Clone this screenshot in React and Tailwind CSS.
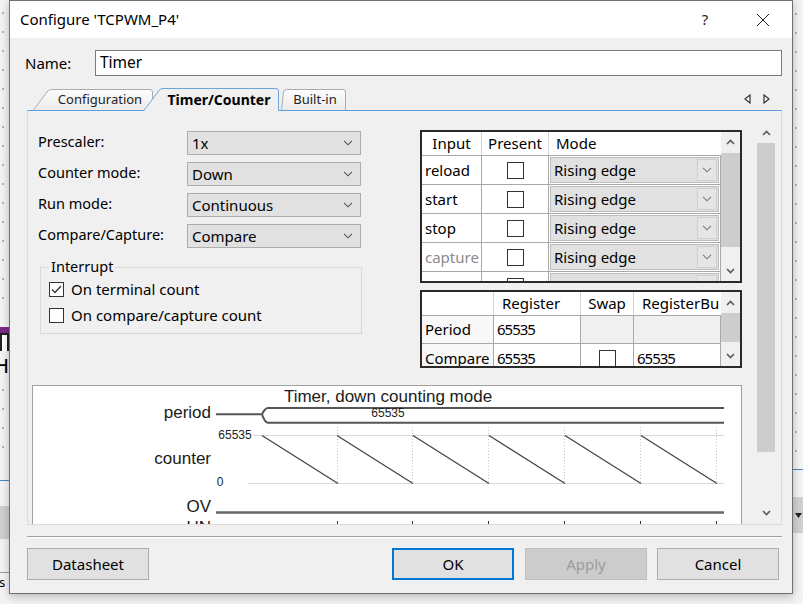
import React from 'react'

const Chevron = ({ className = '' }) => (
  <svg width="10" height="6" viewBox="0 0 10 6" className={className}>
    <path d="M1 0.8 5 4.8 9 0.8" fill="none" stroke="currentColor" strokeWidth="1.1" />
  </svg>
)

const ArrowGlyph = ({ up }) => (
  <svg width="9" height="6" viewBox="0 0 9 6">
    <path d={up ? 'M1 5 4.5 1.5 8 5' : 'M1 1 4.5 4.5 8 1'} fill="none" stroke="#5a5a5a" strokeWidth="1.6" />
  </svg>
)

const CheckBox = ({ checked, big }) => (
  <span
    className={`flex shrink-0 items-center justify-center border border-[#333] bg-white ${
      big ? 'h-[17px] w-[17px]' : 'h-[15px] w-[15px]'
    }`}
  >
    {checked && (
      <svg width="13" height="13" viewBox="0 0 13 13">
        <path d="M2 6.5 5 9.5 11 3" fill="none" stroke="#333" strokeWidth="1.3" />
      </svg>
    )}
  </span>
)

const Combo = ({ value }) => (
  <div className="flex h-[24px] w-[174px] items-center justify-between border border-[#adadad] bg-[#e1e1e1] pl-[4px] pr-[7px] text-[15px]">
    <span>{value}</span>
    <Chevron className="text-[#555]" />
  </div>
)

const fields = [
  ['Prescaler:', '1x'],
  ['Counter mode:', 'Down'],
  ['Run mode:', 'Continuous'],
  ['Compare/Capture:', 'Compare'],
]

const inputs = [
  { name: 'reload', mode: 'Rising edge' },
  { name: 'start', mode: 'Rising edge' },
  { name: 'stop', mode: 'Rising edge' },
  { name: 'capture', mode: 'Rising edge', dim: true },
  { name: 'count', mode: 'Level' },
]

const InputTable = () => (
  <div className="-mt-px flex h-[153px] w-[322px] border-2 border-[#2a2a2a] bg-white text-[15px]">
    <div className="w-[299px] overflow-hidden">
      <div className="flex h-[24px] items-center border-b border-[#a8a8a8]">
        <div className="flex h-full w-[60px] items-center justify-center border-r border-[#d4d4d4]">Input</div>
        <div className="flex h-full w-[67px] items-center justify-center border-r border-[#d4d4d4]">Present</div>
        <div className="pl-[7px]">Mode</div>
      </div>
      {inputs.map(row => (
        <div key={row.name} className="flex h-[29px] shrink-0 border-b border-[#a8a8a8]">
          <div
            className={`flex w-[60px] items-center border-r border-[#a8a8a8] pl-[3px] ${
              row.dim ? 'text-[#8a8a8a]' : ''
            }`}
          >
            {row.name}
          </div>
          <div className="flex w-[67px] items-center justify-center border-r border-[#a8a8a8]">
            <CheckBox big />
          </div>
          <div className="flex flex-1 border-r border-[#a8a8a8] p-px">
            <div className="flex flex-1 border border-[#bdbdbd] bg-[#e1e1e1]">
              <span className="flex flex-1 items-center pl-[3px]">{row.mode}</span>
              <span className="m-px flex w-[20px] items-center justify-center border border-[#cfcfcf] bg-[#e6e6e6] text-[#7a7a7a]">
                <Chevron />
              </span>
            </div>
          </div>
        </div>
      ))}
    </div>
    <div className="flex w-[19px] flex-col bg-[#f0f0f0]">
      <div className="flex h-[20px] items-center justify-center"><ArrowGlyph up /></div>
      <div className="mt-px h-[94px] bg-[#cdcdcd]" />
      <div className="flex-1" />
      <div className="flex h-[20px] items-center justify-center"><ArrowGlyph /></div>
    </div>
  </div>
)

const RegisterTable = () => (
  <div className="mt-[7px] flex h-[78px] w-[322px] border-2 border-[#2a2a2a] bg-white text-[15px]">
    <div className="w-[299px] overflow-hidden">
      <div className="flex h-[24px] border-b border-[#a8a8a8]">
        <div className="w-[72px] border-r border-[#d4d4d4]" />
        <div className="flex w-[87px] items-center border-r border-[#d4d4d4] pl-[8px]">Register</div>
        <div className="flex w-[53px] items-center justify-center border-r border-[#d4d4d4]">Swap</div>
        <div className="flex flex-1 items-center overflow-hidden whitespace-nowrap pl-[8px]">RegisterBu</div>
      </div>
      <div className="flex h-[28px] border-b border-[#a8a8a8]">
        <div className="flex w-[72px] items-center border-r border-[#a8a8a8] bg-[#f8f8f8] pl-[3px]">Period</div>
        <div className="flex w-[87px] items-center border-r border-[#a8a8a8] pl-[3px] tracking-[-1px]">65535</div>
        <div className="w-[53px] border-r border-[#a8a8a8] bg-[#f0f0f0]" />
        <div className="flex-1 border-r border-[#a8a8a8] bg-[#f0f0f0]" />
      </div>
      <div className="flex h-[28px]">
        <div className="flex w-[72px] items-center border-r border-[#a8a8a8] bg-[#f8f8f8] pl-[3px]">Compare</div>
        <div className="flex w-[87px] items-center border-r border-[#a8a8a8] pl-[3px] tracking-[-1px]">65535</div>
        <div className="flex w-[53px] items-center justify-center border-r border-[#a8a8a8]">
          <CheckBox big />
        </div>
        <div className="flex flex-1 items-center border-r border-[#a8a8a8] pl-[3px] tracking-[-1px]">65535</div>
      </div>
    </div>
    <div className="flex w-[19px] flex-col bg-[#f0f0f0]">
      <div className="flex h-[21px] items-center justify-center"><ArrowGlyph up /></div>
      <div className="h-[29px] bg-[#cdcdcd]" />
      <div className="flex-1" />
      <div className="flex h-[21px] items-center justify-center"><ArrowGlyph /></div>
    </div>
  </div>
)

const sawStarts = [229, 304, 380, 456, 532, 608]

const TimingChart = () => (
  <div className="ml-[4px] mt-[17px] h-[160px] w-[710px] shrink-0 border border-[#a0a0a0] bg-white">
    <svg width="708" height="158" fontFamily="'Liberation Sans', Arial, sans-serif">
      <text x="355" y="15.7" fontSize="17" textAnchor="middle" fill="#1a1a1a">
        Timer, down counting mode
      </text>
      <text x="178" y="31.5" fontSize="17" textAnchor="end" fill="#1a1a1a">period</text>
      <line x1="183" y1="28.3" x2="228" y2="28.3" stroke="#555" strokeWidth="2" />
      <path d="M691 22 H235 Q232 22 229 28.3 Q232 36.7 235 36.7 H691" fill="none" stroke="#555" strokeWidth="2" />
      <text x="355" y="31" fontSize="12" textAnchor="middle" fill="#222">65535</text>

      <text x="218.7" y="52.5" fontSize="12" textAnchor="end" fill="#222">65535</text>
      <line x1="220" y1="49.5" x2="691" y2="49.5" stroke="#dadada" />
      <line x1="215" y1="97.5" x2="691" y2="97.5" stroke="#dadada" />
      {sawStarts.map(s => (
        <line key={`v${s}`} x1={s + 75.5} y1="41" x2={s + 75.5} y2="97" stroke="#c4c4c4" strokeDasharray="1 2" />
      ))}
      {sawStarts.map(s => (
        <line key={`s${s}`} x1={s} y1="49.5" x2={s + 76} y2="97.5" stroke="#444" strokeWidth="1.3" />
      ))}
      <text x="178" y="77.5" fontSize="17" textAnchor="end" fill="#1a1a1a">counter</text>
      <text x="183.7" y="99.5" fontSize="12" fill="#222">0</text>

      <text x="178" y="125.7" fontSize="17" textAnchor="end" fill="#1a1a1a">OV</text>
      <line x1="183" y1="126.5" x2="691" y2="126.5" stroke="#666" strokeWidth="2.4" />

      <text x="178" y="146.5" fontSize="17" textAnchor="end" fill="#1a1a1a">UN</text>
      <line x1="183" y1="146" x2="691" y2="146" stroke="#666" strokeWidth="2.4" />
      {sawStarts.map(s => (
        <line key={`t${s}`} x1={s + 75.5} y1="135" x2={s + 75.5} y2="141" stroke="#333" />
      ))}
    </svg>
  </div>
)

const TabShape = ({ d, stroke, fill }) => (
  <svg className="absolute inset-0 h-full w-full" preserveAspectRatio="none">
    <defs>
      <linearGradient id="tabgrad" x1="0" y1="0" x2="0" y2="1">
        <stop offset="0" stopColor="#fcfcfc" />
        <stop offset="1" stopColor="#ececec" />
      </linearGradient>
    </defs>
    <path d={d} fill={fill} stroke={stroke} />
  </svg>
)

const Tabs = () => (
  <div className="ml-[17px] mt-[12px] flex h-[22px] w-[755px] items-end pl-[6px] pr-[12px]">
    <div className="relative flex h-[21px] w-[120px] items-center justify-center pl-[14px] text-[13px] text-[#222]">
      <TabShape d="M0.5 21 L14 3 Q15.5 0.5 18.5 0.5 L117 0.5 Q119.5 0.5 119.5 3 L119.5 21" stroke="#acacac" fill="url(#tabgrad)" />
      <span className="relative">Configuration</span>
    </div>
    <div className="relative z-10 -mb-px -ml-[10px] flex h-[23px] w-[136px] items-center justify-center pl-[16px] text-[14px] font-bold">
      <TabShape d="M0.5 23 L16 2.5 Q17.5 0.5 20 0.5 L133 0.5 Q135.5 0.5 135.5 3 L135.5 23" stroke="#6ea5dc" fill="#f0f0f0" />
      <span className="relative">Timer/Counter</span>
    </div>
    <div className="relative ml-[2px] flex h-[21px] w-[65px] items-center justify-center pl-[3px] text-[13px] text-[#222]">
      <TabShape d="M0.5 21 L2.5 3 Q3 0.5 5.5 0.5 L62 0.5 Q64.5 0.5 64.5 3 L64.5 21" stroke="#acacac" fill="url(#tabgrad)" />
      <span className="relative">Built-in</span>
    </div>
    <div className="ml-auto flex gap-[12px] self-start pt-[6px]">
      <svg width="7" height="10" viewBox="0 0 7 10">
        <path d="M6 1 1 5 6 9Z" fill="#fff" stroke="#333" strokeWidth="1.2" />
      </svg>
      <svg width="7" height="10" viewBox="0 0 7 10">
        <path d="M1 1 6 5 1 9Z" fill="#fff" stroke="#333" strokeWidth="1.2" />
      </svg>
    </div>
  </div>
)

const Pane = () => (
  <div className="ml-[17px] flex h-[415px] w-[755px] border border-[#dcdcdc] border-t-[#5b9de0]">
    <div className="w-[729px] overflow-hidden pt-[20px]">
      <div className="flex items-start">
        <div className="ml-[10px] w-[324px]">
          <div className="flex flex-col gap-[7px]">
            {fields.map(([label, value]) => (
              <div key={label} className="flex h-[24px] items-center">
                <span className="-mt-[3px] w-[149px] text-[14.5px]">{label}</span>
                <Combo value={value} />
              </div>
            ))}
          </div>
          <div className="relative ml-[2px] mt-[19px] h-[67px] w-[322px] border border-[#d8d8d8] pl-[8px] pt-[14px]">
            <span className="absolute -top-[11px] left-[8px] bg-[#f0f0f0] px-[2px] text-[14.5px] leading-[18px]">
              Interrupt
            </span>
            <div className="flex flex-col gap-[11px] text-[15px]">
              <label className="flex h-[15px] items-center gap-[7px]">
                <CheckBox checked />
                <span>On terminal count</span>
              </label>
              <label className="flex h-[15px] items-center gap-[7px]">
                <CheckBox />
                <span>On compare/capture count</span>
              </label>
            </div>
          </div>
        </div>
        <div className="ml-[58px]">
          <InputTable />
          <RegisterTable />
        </div>
      </div>
      <TimingChart />
    </div>
    <div className="mt-[13px] flex h-[398px] w-[18px] flex-col">
      <div className="flex h-[18px] items-center justify-center"><ArrowGlyph up /></div>
      <div className="mt-px h-[309px] bg-[#cdcdcd]" />
      <div className="flex-1" />
      <div className="flex h-[18px] items-center justify-center"><ArrowGlyph /></div>
    </div>
  </div>
)

const Button = ({ children, kind }) => {
  const look =
    kind === 'default'
      ? 'border-2 border-[#0078d7] bg-[#e1e1e1] text-black'
      : kind === 'disabled'
        ? 'border border-[#bfbfbf] bg-[#cccccc] text-[#9c9c9c]'
        : 'border border-[#adadad] bg-[#e1e1e1] text-black'
  return <div className={`flex h-[32px] w-[122px] items-center justify-center text-[15px] ${look}`}>{children}</div>
}

const Dots = ({ count }) => (
  <div className="flex flex-col">
    {Array.from({ length: count }).map((_, i) => (
      <div key={i} className="flex h-[19px] items-start">
        <span className="ml-[2px] h-[2px] w-[2px] bg-[#b5b5b5]" />
      </div>
    ))}
  </div>
)

const LeftBackdrop = () => (
  <div className="absolute left-0 top-0 flex h-full w-[9px] flex-col overflow-hidden bg-[#f3f3f3]">
    <div className="h-[12px]" />
    <Dots count={16} />
    <div className="h-[11px]" />
    <div className="h-[6px] bg-[#7b2a84]" />
    <div className="h-[18px] border-x-2 border-t-2 border-[#222] bg-white" />
    <div className="h-[8px]" />
    <div className="relative h-[18px] overflow-hidden">
      <span className="absolute -left-[6px] -top-[3px] font-['DejaVu_Sans',sans-serif] text-[20px] leading-none">H</span>
    </div>
    <div className="h-[12px]" />
    <Dots count={4} />
    <div className="h-[15px]" />
    <div className="h-px bg-[#4a86c8]" />
    <div className="h-[25px]" />
    <div className="h-[33px] bg-[#cfcfcf]" />
    <div className="h-[33px]" />
    <div className="h-px bg-[#9a9a9a]" />
    <div className="relative h-[20px]">
      <span className="absolute -left-[1px] top-[3px] font-['Noto_Sans',sans-serif] text-[13px] leading-none">s</span>
    </div>
  </div>
)

const RightBackdrop = () => (
  <div className="absolute right-0 top-0 flex h-full w-[10px] flex-col overflow-hidden bg-[#f3f3f3]">
    <div className="h-[13px]" />
    <Dots count={24} />
    <div className="h-px bg-[#4a86c8]" />
    <div className="h-[27px]" />
    <div className="flex h-[36px] items-center justify-end bg-[#d0d0d0] pr-px">
      <svg width="7" height="5" viewBox="0 0 7 5">
        <path d="M0 0H7L3.5 5Z" fill="#222" />
      </svg>
    </div>
  </div>
)

export default function App() {
  return (
    <div className="relative h-[604px] w-[803px] overflow-hidden bg-[#f0f0f0] font-['Noto_Sans','Open_Sans',sans-serif] text-black">
      <LeftBackdrop />
      <RightBackdrop />
      <div className="absolute left-[9px] top-0 flex h-[594px] w-[784px] flex-col border border-[#707070] bg-[#f0f0f0] shadow-[0_2px_8px_rgba(0,0,0,0.25)]">
        <div className="flex h-[37px] shrink-0 items-center bg-white pl-[10px] text-[15px]">
          <span>Configure 'TCPWM_P4'</span>
          <span className="ml-auto w-[46px] text-center text-[15px] text-[#222]">?</span>
          <span className="ml-[12px] mr-[6px] flex w-[46px] justify-center">
            <svg width="14" height="14" viewBox="0 0 14 14">
              <path d="M1 1 13 13M13 1 1 13" stroke="#222" strokeWidth="1" />
            </svg>
          </span>
        </div>

        <div className="mt-[12px] flex h-[26px] items-center pl-[15px]">
          <span className="w-[70px] text-[15px]">Name:</span>
          <div className="flex h-[26px] w-[687px] items-center border border-[#7a7a7a] bg-white pl-[4px] text-[15.5px]">
            Timer
          </div>
        </div>

        <Tabs />
        <Pane />

        <div className="ml-[17px] mt-[11px] h-[2px] w-[755px] border-b border-t border-b-white border-t-[#a0a0a0]" />

        <div className="ml-[17px] mt-[10px] flex">
          <Button>Datasheet</Button>
          <div className="ml-[243px]">
            <Button kind="default">OK</Button>
          </div>
          <div className="ml-[11px]">
            <Button kind="disabled">Apply</Button>
          </div>
          <div className="ml-[10px]">
            <Button>Cancel</Button>
          </div>
        </div>
      </div>
    </div>
  )
}
